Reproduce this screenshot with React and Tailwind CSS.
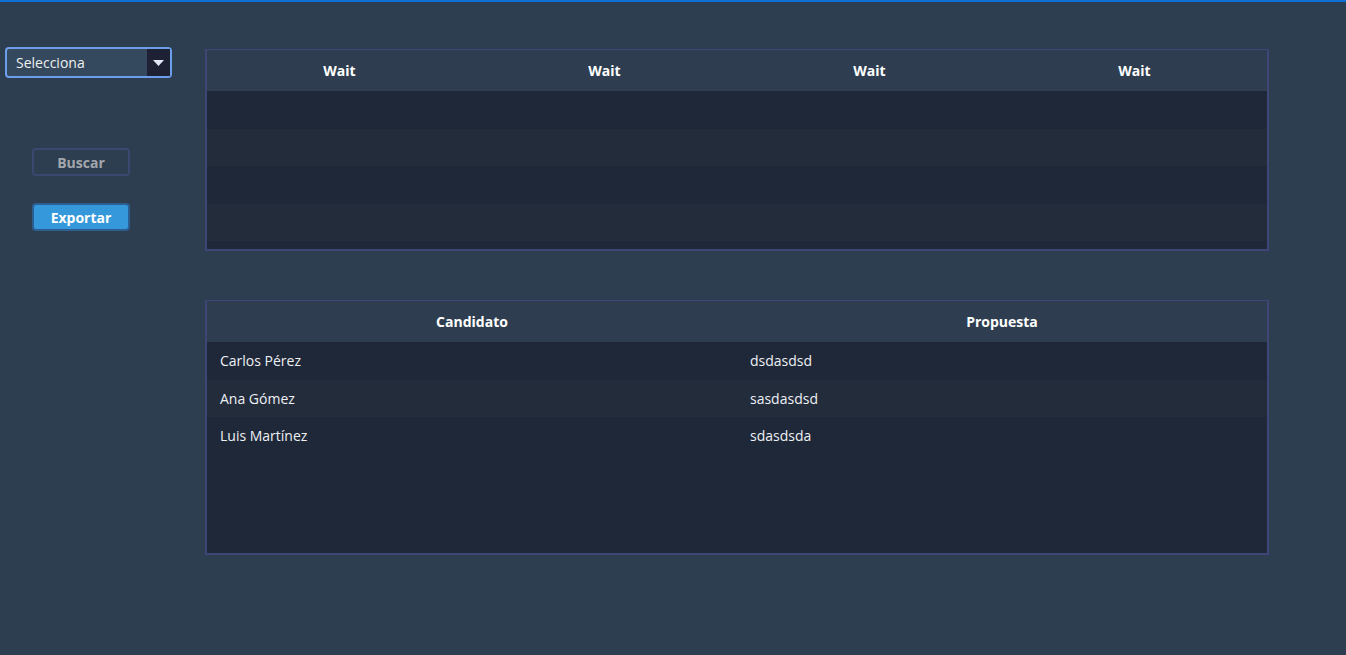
import React from "react";

const rows1 = [0, 1, 2, 3, 4];
const people = [
  ["Carlos Pérez", "dsdasdsd"],
  ["Ana Gómez", "sasdasdsd"],
  ["Luis Martínez", "sdasdsda"],
];

export default function App() {
  return (
    <div
      className="w-[1346px] h-[655px] bg-[#2d3e50] border-t-2 border-[#0e6fd4] text-white overflow-hidden flex"
      style={{ fontFamily: '"Open Sans", "Noto Sans", sans-serif' }}
    >
      <div className="w-[205px] shrink-0 pt-[45px] pl-[5px] flex flex-col">
        <div className="w-[167px] h-[31px] border-2 border-[#6d9eeb] rounded-[4px] bg-[#34495e] flex items-center justify-between">
          <span className="pl-[9px] pt-[1px] text-[14px] leading-none text-[#f0f0f0]">Selecciona</span>
          <div className="w-[23px] h-full bg-[#1e2133] flex items-center justify-center">
            <svg width="11" height="6" viewBox="0 0 11 6">
              <path d="M0 0 L11 0 L5.5 6 Z" fill="#e4e6f5" />
            </svg>
          </div>
        </div>
        <div className="pl-[27px] flex flex-col">
          <button className="mt-[70px] w-[98px] h-[28px] border-2 border-[#3a4870] rounded-[4px] text-[14px] font-bold text-[#a3a7ad] flex items-center justify-center">
            Buscar
          </button>
          <button className="mt-[27px] w-[98px] h-[28px] border-2 border-[#2d5e92] rounded-[4px] bg-[#3498db] text-[14px] font-bold text-white flex items-center justify-center">
            Exportar
          </button>
        </div>
      </div>
      <div className="w-[1064px] pt-[47px] flex flex-col">
        <div className="h-[202px] border-2 border-t border-[#3f4677] overflow-hidden bg-[#1f2838]">
          <div className="grid grid-cols-4 h-[41px] bg-[#2e3e50] items-center">
            {["Wait", "Wait", "Wait", "Wait"].map((t, i) => (
              <div key={i} className="text-center text-[14px] font-bold">{t}</div>
            ))}
          </div>
          {rows1.map((r) => (
            <div key={r} className={"h-[37.5px] " + (r % 2 === 0 ? "bg-[#1f2838]" : "bg-[#232c3b]")} />
          ))}
        </div>
        <div className="mt-[49px] h-[255px] border-2 border-t border-[#3f4677] overflow-hidden bg-[#1f2838]">
          <div className="grid grid-cols-2 h-[41px] bg-[#2e3e50] items-center">
            <div className="text-center text-[14px] font-bold">Candidato</div>
            <div className="text-center text-[14px] font-bold">Propuesta</div>
          </div>
          {people.map((p, i) => (
            <div
              key={i}
              className={"grid grid-cols-2 h-[37.5px] items-center text-[14px] text-[#eef0f5] " + (i % 2 === 0 ? "bg-[#1f2838]" : "bg-[#232c3b]")}
            >
              <div className="pl-[13px]">{p[0]}</div>
              <div className="pl-[13px]">{p[1]}</div>
            </div>
          ))}
        </div>
      </div>
    </div>
  );
}
